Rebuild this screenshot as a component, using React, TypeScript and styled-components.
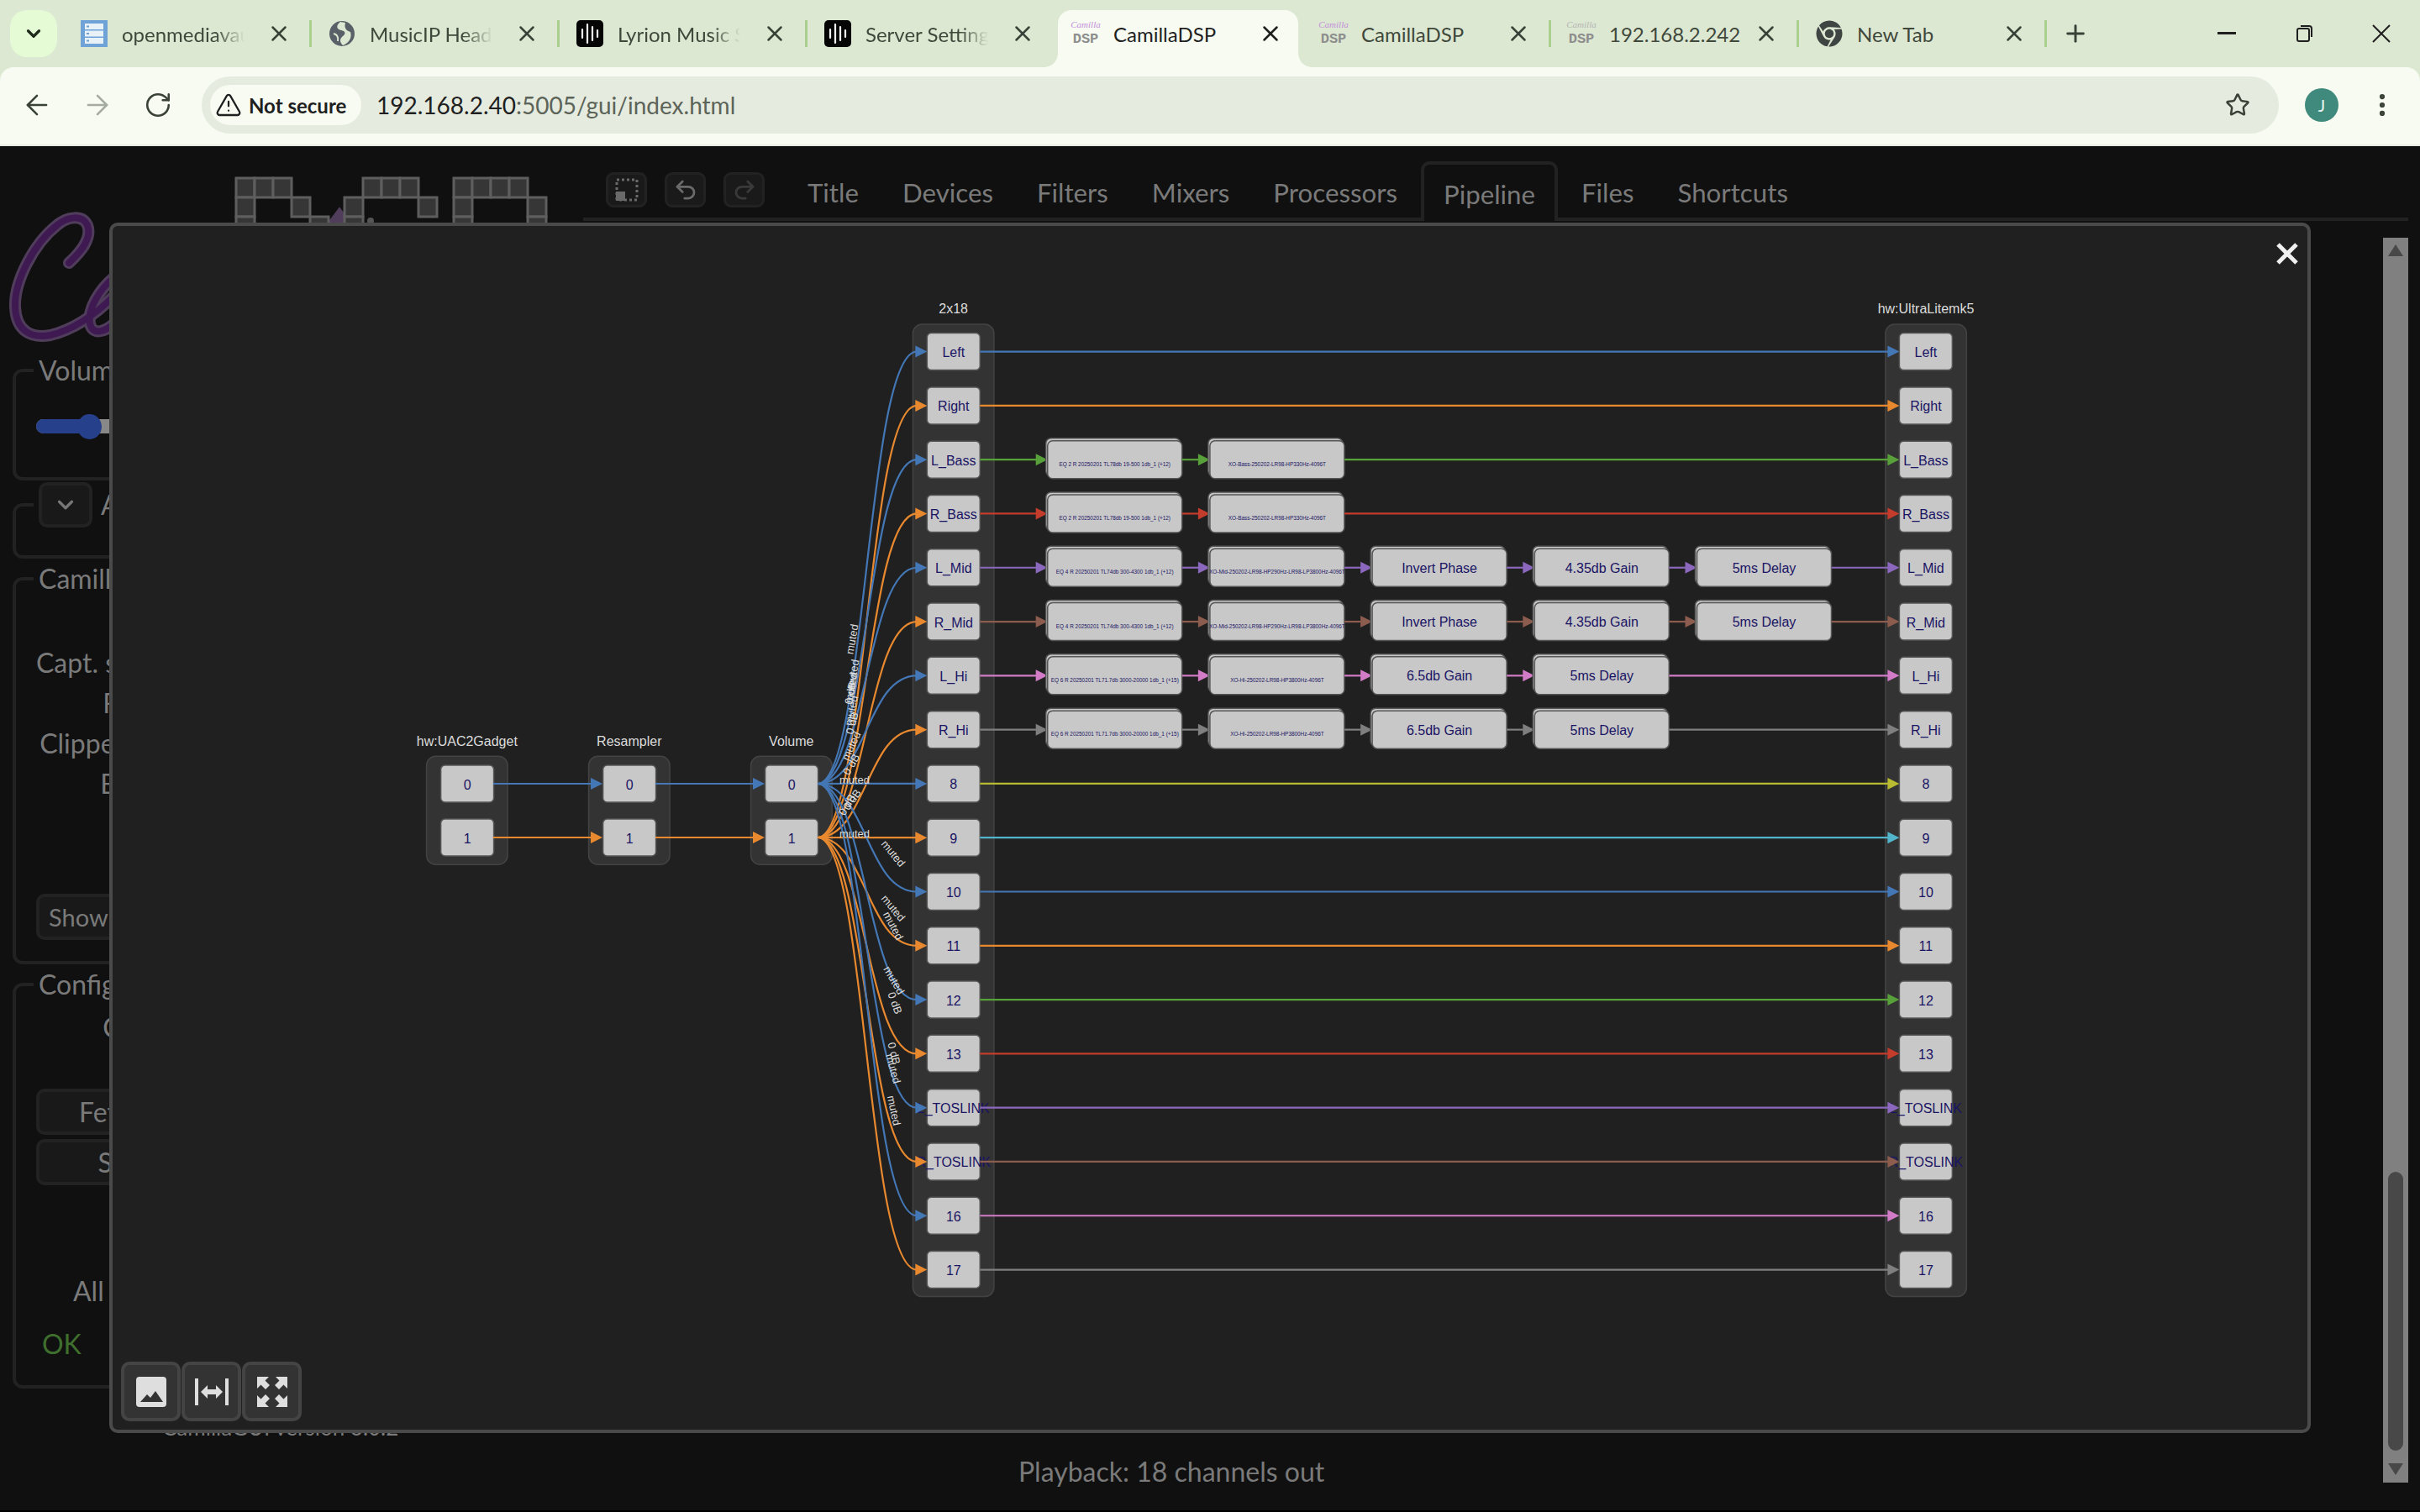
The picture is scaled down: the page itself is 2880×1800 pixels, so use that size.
import styled, { createGlobalStyle } from "styled-components";
import {
	ArrowLeft,
	ArrowRight,
	ChevronDown,
	EllipsisVertical,
	Plus,
	Redo2,
	RotateCw,
	Star,
	TriangleAlert,
	Undo2,
	X,
} from "lucide-react";
import { FaChrome } from "react-icons/fa";

const UI_FONT = `Lato, "Noto Sans", sans-serif`;
const GRAPH_FONT = `"Liberation Sans", Arial, sans-serif`;

const GlobalStyle = createGlobalStyle`
	html, body {
		margin: 0;
		padding: 0;
		background: #101010;
	}
	* {
		box-sizing: border-box;
	}
`;

const tabs = [
	{ icon: "omv", title: "openmediavault", fade: true },
	{ icon: "globe", title: "MusicIP Headless", fade: true },
	{ icon: "lyrion", title: "Lyrion Music Server", fade: true },
	{ icon: "lyrion", title: "Server Settings", fade: true },
	{ icon: "camilla", title: "CamillaDSP", active: true },
	{ icon: "camilla", title: "CamillaDSP" },
	{ icon: "camillaMuted", title: "192.168.2.242" },
	{ icon: "chrome", title: "New Tab" },
];

const navItems = ["Title", "Devices", "Filters", "Mixers", "Processors", "Pipeline", "Files", "Shortcuts"];

const lineColors = ["#4477b5", "#e8892f", "#57a03a", "#c43c2c", "#8b68bd", "#8c5d4f", "#d27cc7", "#7f7f7f", "#b8ba32", "#52b5cc"];

const outputs = ["Left", "Right", "L_Bass", "R_Bass", "L_Mid", "R_Mid", "L_Hi", "R_Hi", "8", "9", "10", "11", "12", "13", "L_TOSLINK", "R_TOSLINK", "16", "17"];

const EQ2 = "EQ 2 R 20250201 TL78db 19-500 1db_1 (+12)";
const EQ4 = "EQ 4 R 20250201 TL74db 300-4300 1db_1 (+12)";
const EQ6 = "EQ 6 R 20250201 TL71.7db 3000-20000 1db_1 (+15)";
const XOB = "XO-Bass-250202-LR98-HP330Hz-4096T";
const XOM = "XO-Mid-250202-LR98-HP290Hz-LR98-LP3800Hz-4096T";
const XOH = "XO-Hi-250202-LR98-HP3800Hz-4096T";

const filterRows: Record<number, string[]> = {
	2: [EQ2, XOB],
	3: [EQ2, XOB],
	4: [EQ4, XOM, "Invert Phase", "4.35db Gain", "5ms Delay"],
	5: [EQ4, XOM, "Invert Phase", "4.35db Gain", "5ms Delay"],
	6: [EQ6, XOH, "6.5db Gain", "5ms Delay"],
	7: [EQ6, XOH, "6.5db Gain", "5ms Delay"],
};

const fanLabels = [
	{ x: 1014, y: 761, a: -80, t: "muted" },
	{ x: 1015, y: 803, a: -80, t: "muted" },
	{ x: 1013, y: 819, a: -80, t: "muted" },
	{ x: 1012, y: 825, a: -80, t: "0 dB" },
	{ x: 1013, y: 846, a: -78, t: "muted" },
	{ x: 1014, y: 861, a: -75, t: "0 dB" },
	{ x: 1013, y: 888, a: -65, t: "muted" },
	{ x: 1013, y: 910, a: -60, t: "0 dB" },
	{ x: 1017, y: 928, a: 0, t: "muted" },
	{ x: 1014, y: 952, a: -55, t: "0 dB" },
	{ x: 1008, y: 958, a: -60, t: "0 dB" },
	{ x: 1017, y: 992, a: 0, t: "muted" },
	{ x: 1063, y: 1016, a: 50, t: "muted" },
	{ x: 1063, y: 1081, a: 50, t: "muted" },
	{ x: 1063, y: 1102, a: 62, t: "muted" },
	{ x: 1064, y: 1167, a: 60, t: "muted" },
	{ x: 1065, y: 1194, a: 70, t: "0 dB" },
	{ x: 1064, y: 1254, a: 75, t: "0 dB" },
	{ x: 1063, y: 1272, a: 75, t: "muted" },
	{ x: 1064, y: 1322, a: 78, t: "muted" },
];

const rowY = (i: number) => 418.6 + i * 64.29;

const Arrow = ({ tip, y, color }: { tip: number; y: number; color: string }) => (
	<polygon points={`${tip - 14},${y - 7} ${tip},${y} ${tip - 14},${y + 7}`} fill={color} />
);

const Edge = ({ from, tip, y, color }: { from: number; tip: number; y: number; color: string }) => (
	<>
		<EdgeLine d={`M${from} ${y} L${tip - 12} ${y}`} stroke={color} />
		<Arrow tip={tip} y={y} color={color} />
	</>
);

const ChannelNode = ({ x, y, label }: { x: number; y: number; label: string }) => (
	<>
		<NodeRect x={x} y={y - 22} width={63} height={44} rx={5} />
		<NodeText x={x + 31.5} y={y + 6.5}>
			{label}
		</NodeText>
	</>
);

const FilterNode = ({ x, y, label }: { x: number; y: number; label: string }) => {
	const small = label.length > 20;
	return (
		<>
			<NodeRect x={x - 2} y={y - 25.5} width={160} height={45} rx={6} />
			<NodeRect x={x} y={y - 22.5} width={160} height={45} rx={6} />
			<NodeText x={x + 80} y={small ? y + 7.6 : y + 6} $small={small}>
				{label}
			</NodeText>
		</>
	);
};

const PipelineGraph = () => (
	<GraphSvg viewBox="134 269 2612 1433">
		{[
			{ x: 507.6, label: "hw:UAC2Gadget" },
			{ x: 700.6, label: "Resampler" },
			{ x: 893.6, label: "Volume" },
		].map((g) => (
			<g key={g.label}>
				<GroupText x={g.x + 48.2} y={887.5}>
					{g.label}
				</GroupText>
				<GroupRect x={g.x} y={900.3} width={96.5} height={129} rx={11} />
				<ChannelNode x={g.x + 17} y={933} label="0" />
				<ChannelNode x={g.x + 17} y={997} label="1" />
			</g>
		))}

		<GroupText x={1134.6} y={373}>
			2x18
		</GroupText>
		<GroupRect x={1086.4} y={386} width={96.5} height={1157.6} rx={11} />
		<GroupText x={2292} y={373}>
			hw:UltraLitemk5
		</GroupText>
		<GroupRect x={2243.8} y={386} width={96.5} height={1157.6} rx={11} />

		{outputs.map((name, i) => (
			<g key={`out${i}`}>
				<ChannelNode x={1103.3} y={rowY(i)} label={name} />
				<ChannelNode x={2260.4} y={rowY(i)} label={name} />
			</g>
		))}

		{[0, 1].map((ch) => (
			<g key={`in${ch}`}>
				<Edge from={587} tip={717} y={933 + ch * 64} color={lineColors[ch]} />
				<Edge from={780} tip={910} y={933 + ch * 64} color={lineColors[ch]} />
			</g>
		))}

		{outputs.map((_, i) => {
			const y0 = i % 2 === 0 ? 933 : 997;
			const y1 = rowY(i);
			return (
				<EdgeLine key={`fan${i}`} d={`M973 ${y0} C1031 ${y0} 1031 ${y1} 1091 ${y1}`} stroke={lineColors[i % 2]} />
			);
		})}
		{outputs.map((_, i) => (
			<Arrow key={`fanArrow${i}`} tip={1103.3} y={rowY(i)} color={lineColors[i % 2]} />
		))}

		{fanLabels.map((l, i) => (
			<FanText key={`label${i}`} transform={`translate(${l.x} ${l.y}) rotate(${l.a})`}>
				{l.t}
			</FanText>
		))}

		{outputs.map((_, i) => {
			const boxes = filterRows[i] || [];
			const color = lineColors[i % 10];
			const y = rowY(i);
			const lastEnd = boxes.length ? 1246.7 + (boxes.length - 1) * 193.2 + 160 : 1166.3;
			return (
				<g key={`row${i}`}>
					{boxes.map((label, n) => {
						const x = 1246.7 + n * 193.2;
						return (
							<g key={`box${n}`}>
								<Edge from={n === 0 ? 1166.3 : x - 33.2} tip={x} y={y} color={color} />
								<FilterNode x={x} y={y} label={label} />
							</g>
						);
					})}
					<Edge from={lastEnd} tip={2260.4} y={y} color={color} />
				</g>
			);
		})}
	</GraphSvg>
);

const Favicon = ({ icon }: { icon: string }) => {
	if (icon === "omv") {
		return (
			<svg width="32" height="32" viewBox="0 0 32 32">
				<rect x="0" y="0" width="32" height="32" fill="#6fa3d8" />
				<rect x="5" y="4" width="22" height="7" fill="#e8f0f8" />
				<rect x="5" y="12.5" width="22" height="7" fill="#e8f0f8" />
				<rect x="5" y="21" width="22" height="7" fill="#e8f0f8" />
				<rect x="7" y="6.5" width="3" height="2" fill="#6fa3d8" />
				<rect x="7" y="15" width="3" height="2" fill="#6fa3d8" />
				<rect x="7" y="23.5" width="3" height="2" fill="#6fa3d8" />
			</svg>
		);
	}
	if (icon === "globe") {
		return (
			<svg width="32" height="32" viewBox="0 0 32 32">
				<circle cx="16" cy="16" r="15" fill="#596068" />
				<path d="M14 2 C8 7 10 11 15 12 C20 13 21 16 17 19 C13 22 13 26 17 30 C25 27 28 20 26 14 C22 13 18 10 20 3 Z" fill="#dde8d2" />
				<path d="M6 16 C10 17 12 20 11 25" stroke="#dde8d2" strokeWidth="2" fill="none" />
			</svg>
		);
	}
	if (icon === "lyrion") {
		return (
			<svg width="32" height="32" viewBox="0 0 32 32">
				<rect width="32" height="32" rx="5" fill="#050505" />
				<path d="M7 11V21M13 5V27M19 8V24M25 12V20" stroke="#f2f2f2" strokeWidth="2.2" strokeLinecap="round" />
			</svg>
		);
	}
	if (icon === "chrome") {
		return <FaChrome size={32} color="#3f4543" />;
	}
	return (
		<CamillaIcon>
			<CamillaScript $muted={icon === "camillaMuted"}>Camilla</CamillaScript>
			<CamillaMark>DSP</CamillaMark>
		</CamillaIcon>
	);
};

const CamillaLogo = () => (
	<LogoSvg viewBox="0 0 680 245">
		<g transform="translate(0 -174)">
			<LogoStroke d="M82 313 C96 300 110 284 104 268 C98 255 80 258 68 268 C40 290 17 335 18 365 C19 395 38 403 60 399 C85 393 110 378 136 352" />
			<LogoStroke d="M136 330 C118 345 104 368 107 385 C110 400 125 395 136 385" />
			<LogoStroke d="M398 266 L404 258 L410 266" />
			<LogoFill d="M82 313 C96 300 110 284 104 268 C98 255 80 258 68 268 C40 290 17 335 18 365 C19 395 38 403 60 399 C85 393 110 378 136 352" />
			<LogoFill d="M136 330 C118 345 104 368 107 385 C110 400 125 395 136 385" />
			{[
				[281, 212], [303, 212], [325, 212], [281, 235], [347, 235], [281, 258], [369, 258],
				[432, 212], [454, 212], [476, 212], [410, 235], [498, 235], [410, 258],
				[540, 212], [562, 212], [584, 212], [606, 212], [540, 235], [628, 235], [540, 258], [628, 258],
			].map(([x, y]) => (
				<PixelCell key={`${x}-${y}`} x={x} y={y} width={22} height={23} />
			))}
			<circle cx="441" cy="263" r="4" fill="#555" />
		</g>
	</LogoSvg>
);

const App = () => {
	return (
		<Screen>
			<GlobalStyle />
			<TabStrip>
				<TabSearch>
					<ChevronDown size={26} strokeWidth={3} color="#1f2a1c" />
				</TabSearch>
				{tabs.map((tab, idx) => (
					<Tab key={`tab${idx}`} $noSep={idx === 3 || idx === 4}>
						{tab.active && <TabShape />}
						<TabIcon>
							<Favicon icon={tab.icon} />
						</TabIcon>
						<TabTitle $fade={!!tab.fade} $active={!!tab.active}>
							{tab.title}
						</TabTitle>
						<TabClose>
							<X size={30} strokeWidth={2} color={tab.active ? "#1f1f1f" : "#3a4238"} />
						</TabClose>
					</Tab>
				))}
				<NewTab>
					<Plus size={32} strokeWidth={2.2} color="#3a4238" />
				</NewTab>
				<WindowControls>
					<WindowButton>
						<svg width="22" height="4" viewBox="0 0 22 4">
							<rect width="22" height="3" fill="#1f1f1f" />
						</svg>
					</WindowButton>
					<WindowButton>
						<svg width="24" height="24" viewBox="0 0 24 24" fill="none" stroke="#1f1f1f" strokeWidth="2">
							<rect x="4" y="6" width="14" height="15" rx="2" />
							<path d="M8 3H18C20 3 21 4 21 6V16" />
						</svg>
					</WindowButton>
					<WindowButton>
						<svg width="24" height="24" viewBox="0 0 24 24" stroke="#1f1f1f" strokeWidth="2">
							<path d="M2 2L22 22M22 2L2 22" />
						</svg>
					</WindowButton>
				</WindowControls>
			</TabStrip>

			<Toolbar>
				<ToolbarButton>
					<ArrowLeft size={38} strokeWidth={1.6} color="#3a4238" />
				</ToolbarButton>
				<ToolbarButton>
					<ArrowRight size={38} strokeWidth={1.6} color="#a5aba0" />
				</ToolbarButton>
				<ToolbarButton>
					<RotateCw size={34} strokeWidth={1.8} color="#3a4238" />
				</ToolbarButton>
				<Omnibox>
					<SecurityChip>
						<TriangleAlert size={32} strokeWidth={1.7} color="#1f1f1f" />
						Not secure
					</SecurityChip>
					<UrlText>
						<UrlHost>192.168.2.40</UrlHost>:5005/gui/index.html
					</UrlText>
					<OmniboxStar>
						<Star size={30} strokeWidth={2} color="#3a4238" />
					</OmniboxStar>
				</Omnibox>
				<ToolbarButton $margin="0 0 0 15px">
					<Avatar>J</Avatar>
				</ToolbarButton>
				<ToolbarButton>
					<EllipsisVertical size={34} strokeWidth={2.4} color="#3a4238" />
				</ToolbarButton>
			</Toolbar>

			<Page>
				<Sidebar>
					<CamillaLogo />
					<Panel $height={153}>
						<PanelLegend>Volume</PanelLegend>
						<SliderTrack>
							<SliderFill />
							<SliderThumb />
						</SliderTrack>
					</Panel>
					<Panel $height={91}>
						<PanelLegend>
							<ExpandRow>
								<ExpandButton>
									<ChevronDown size={30} strokeWidth={2.6} color="#777" />
								</ExpandButton>
								Advanced
							</ExpandRow>
						</PanelLegend>
					</Panel>
					<Panel $height={481}>
						<PanelLegend>CamillaDSP</PanelLegend>
						<StatusRows>
							<StatusLabel>Capt. samplerate</StatusLabel>
							<StatusLabel>Rate adjust</StatusLabel>
							<StatusLabel $shift={-4}>Clipped samples</StatusLabel>
							<StatusLabel>Buffer level</StatusLabel>
						</StatusRows>
						<ShowButton>Show more</ShowButton>
					</Panel>
					<Panel $height={503}>
						<PanelLegend>Config</PanelLegend>
						<ConfigRow>Config file</ConfigRow>
						<ActionButton $top={49}>Fetch from DSP</ActionButton>
						<ActionButton $top={5}>Send to DSP</ActionButton>
						<StatusNote>All changes applied</StatusNote>
						<StatusOk>OK</StatusOk>
					</Panel>
					<VersionText>CamillaGUI version 3.0.2</VersionText>
				</Sidebar>

				<Main>
					<Nav>
						<NavTool>
							<svg width="30" height="30" viewBox="0 0 30 30" fill="none">
								<rect x="3" y="3" width="24" height="24" stroke="#6a6a6a" strokeWidth="3" strokeDasharray="3 3" />
								<rect x="2" y="17" width="11" height="11" fill="#6a6a6a" />
							</svg>
						</NavTool>
						<NavTool>
							<Undo2 size={30} strokeWidth={2.2} color="#6a6a6a" />
						</NavTool>
						<NavTool>
							<Redo2 size={30} strokeWidth={2.2} color="#3a3a3a" />
						</NavTool>
						<NavTabs>
							{navItems.map((item) => (
								<NavTab key={item} $active={item === "Pipeline"}>
									{item}
								</NavTab>
							))}
						</NavTabs>
					</Nav>
					<MainBody>
						<Workspace>
							<PlaybackText>Playback: 18 channels out</PlaybackText>
						</Workspace>
						<Scrollbar>
							<ScrollUp />
							<ScrollThumb />
							<ScrollDown />
						</Scrollbar>
					</MainBody>
				</Main>

				<Modal>
					<PipelineGraph />
					<ModalClose>
						<svg width="26" height="26" viewBox="0 0 26 26" stroke="#f0f0f0" strokeWidth="5">
							<path d="M2 2L24 24M24 2L2 24" />
						</svg>
					</ModalClose>
					<ModalTools>
						<ModalTool>
							<svg width="36" height="36" viewBox="0 0 36 36">
								<rect width="36" height="36" rx="4" fill="#dedede" />
								<path d="M5 30L13 21L17 25L23 17L32 30Z" fill="#333" />
							</svg>
						</ModalTool>
						<ModalTool>
							<svg width="40" height="32" viewBox="0 0 40 32">
								<rect x="0" y="0" width="4" height="32" fill="#dedede" />
								<rect x="36" y="0" width="4" height="32" fill="#dedede" />
								<path d="M7 16L15 8V13H25V8L33 16L25 24V19H15V24Z" fill="#dedede" />
							</svg>
						</ModalTool>
						<ModalTool>
							<svg width="36" height="36" viewBox="0 0 36 36" fill="#dedede" stroke="none">
								{[0, 90, 180, 270].map((r) => (
									<g key={r} transform={`rotate(${r} 18 18)`}>
										<path d="M0 0H14L9.5 4.5L15 10L10 15L4.5 9.5L0 14Z" />
									</g>
								))}
							</svg>
						</ModalTool>
					</ModalTools>
				</Modal>
			</Page>
		</Screen>
	);
};

const Screen = styled.div`
	display: flex;
	flex-direction: column;
	position: relative;
	width: 2880px;
	height: 1800px;
	overflow: hidden;
	font-family: ${UI_FONT};
	background: #dde8d2;
`;

const TabStrip = styled.div`
	display: flex;
	align-items: flex-end;
	height: 80px;
	padding-left: 12px;
`;

const TabSearch = styled.div`
	display: flex;
	justify-content: center;
	align-items: center;
	align-self: flex-start;
	width: 56px;
	height: 56px;
	margin: 12px 8px 0 0;
	border-radius: 20px;
	background: #e5fbd6;
`;

const Tab = styled.div<{ $noSep: boolean }>`
	display: flex;
	align-items: center;
	position: relative;
	width: 295px;
	height: 68px;
	padding: 0 19px 12px 20px;

	&::after {
		content: "";
		display: ${(p) => (p.$noSep ? "none" : "block")};
		position: absolute;
		right: 0;
		top: 12px;
		width: 3px;
		height: 32px;
		background: #a9d08e;
	}
`;

const TabShape = styled.div`
	position: absolute;
	top: 0;
	bottom: 0;
	left: 3px;
	right: 6px;
	border-radius: 16px 16px 0 0;
	background: #f7fbf1;

	&::before,
	&::after {
		content: "";
		position: absolute;
		bottom: 0;
		width: 16px;
		height: 16px;
	}
	&::before {
		left: -16px;
		background: radial-gradient(circle at 0 0, transparent 15.5px, #f7fbf1 16px);
	}
	&::after {
		right: -16px;
		background: radial-gradient(circle at 100% 0, transparent 15.5px, #f7fbf1 16px);
	}
`;

const TabIcon = styled.div`
	display: flex;
	position: relative;
	flex-shrink: 0;
	width: 32px;
	height: 32px;
	margin-right: 17px;
`;

const TabTitle = styled.div<{ $fade: boolean; $active: boolean }>`
	position: relative;
	flex: 1;
	min-width: 0;
	margin-right: 8px;
	overflow: hidden;
	white-space: nowrap;
	font-size: 24px;
	color: ${(p) => (p.$active ? "#1f1f1f" : "#3f483b")};
	${(p) => p.$fade && "mask-image: linear-gradient(to right, #000 70%, transparent 92%);"}
`;

const TabClose = styled.div`
	display: flex;
	justify-content: center;
	position: relative;
	flex-shrink: 0;
	width: 40px;
`;

const NewTab = styled.div`
	display: flex;
	justify-content: center;
	align-items: center;
	align-self: flex-start;
	width: 40px;
	height: 56px;
	margin: 12px 0 0 14px;
`;

const WindowControls = styled.div`
	display: flex;
	align-self: flex-start;
	margin-left: auto;
`;

const WindowButton = styled.div`
	display: flex;
	justify-content: center;
	align-items: center;
	width: 92px;
	height: 80px;
`;

const CamillaIcon = styled.div`
	display: flex;
	flex-direction: column;
	align-items: center;
	width: 32px;
	height: 32px;
	line-height: 1;
`;

const CamillaScript = styled.span<{ $muted: boolean }>`
	font-family: "Liberation Serif", serif;
	font-style: italic;
	font-size: 11px;
	height: 14px;
	white-space: nowrap;
	color: ${(p) => (p.$muted ? "#b5b5b5" : "#c48fdc")};
`;

const CamillaMark = styled.span`
	font-family: "Liberation Mono", monospace;
	font-size: 17px;
	font-weight: 700;
	color: #8e8e8e;
`;

const Toolbar = styled.div`
	display: flex;
	align-items: center;
	flex-shrink: 0;
	height: 94px;
	padding: 0 9px 2px 8px;
	border-bottom: 2px solid #e6ecdf;
	border-radius: 16px 16px 0 0;
	background: #f7fbf1;
`;

const ToolbarButton = styled.div<{ $margin?: string }>`
	display: flex;
	justify-content: center;
	align-items: center;
	flex-shrink: 0;
	width: 72px;
	height: 68px;
	margin: ${(p) => p.$margin || 0};
`;

const Omnibox = styled.div`
	display: flex;
	align-items: center;
	flex: 1;
	height: 68px;
	margin-left: 16px;
	padding: 0 34px 0 10px;
	border-radius: 34px;
	background: #e5ebdf;
`;

const SecurityChip = styled.div`
	display: flex;
	align-items: center;
	gap: 8px;
	width: 180px;
	height: 48px;
	padding-left: 6px;
	border-radius: 24px;
	background: #f7fbf1;
	font-size: 24px;
	font-weight: 700;
	color: #1f1f1f;
	white-space: nowrap;
`;

const UrlText = styled.div`
	margin-left: 18px;
	font-size: 28px;
	color: #5c6358;
`;

const UrlHost = styled.span`
	color: #1f1f1f;
`;

const OmniboxStar = styled.div`
	display: flex;
	margin-left: auto;
`;

const Avatar = styled.div`
	display: flex;
	justify-content: center;
	align-items: center;
	width: 40px;
	height: 40px;
	border-radius: 50%;
	background: #3f8a7c;
	font-size: 20px;
	color: #e8f3f0;
`;

const Page = styled.div`
	display: flex;
	position: relative;
	flex: 1;
	min-height: 0;
	border-bottom: 2px solid #000;
	background: #101010;
	color: #7a7a7a;
	font-size: 32px;
`;

const Sidebar = styled.aside`
	display: flex;
	flex-direction: column;
	flex-shrink: 0;
	width: 694px;
	padding-left: 15px;
`;

const LogoSvg = styled.svg`
	display: block;
	flex-shrink: 0;
	width: 680px;
	height: 245px;
	margin-left: -15px;
`;

const LogoStroke = styled.path`
	fill: none;
	stroke: #503c5b;
	stroke-width: 14;
	stroke-linecap: round;
`;

const LogoFill = styled.path`
	fill: none;
	stroke: #3f1a52;
	stroke-width: 8;
	stroke-linecap: round;
`;

const PixelCell = styled.rect`
	fill: #363636;
	stroke: #5e5e5e;
	stroke-width: 3;
`;

const Panel = styled.fieldset<{ $height: number }>`
	flex-shrink: 0;
	width: 640px;
	height: ${(p) => p.$height}px;
	min-width: 0;
	margin: 0 0 2px;
	padding: 0;
	border: 4px solid #222;
	border-radius: 12px;
`;

const PanelLegend = styled.legend`
	margin-left: 21px;
	padding: 0 6px;
	line-height: 44px;
`;

const ExpandRow = styled.div`
	display: flex;
	align-items: center;
	gap: 10px;
`;

const ExpandButton = styled.div`
	display: flex;
	justify-content: center;
	align-items: center;
	width: 64px;
	height: 54px;
	border: 4px solid #222;
	border-radius: 10px;
	background: #191919;
`;

const SliderTrack = styled.div`
	position: relative;
	width: 500px;
	height: 17px;
	margin: 36px 0 0 24px;
	border-radius: 9px;
	background: #888;
`;

const SliderFill = styled.div`
	width: 60px;
	height: 100%;
	border-radius: 9px 0 0 9px;
	background: #27408b;
`;

const SliderThumb = styled.div`
	position: absolute;
	left: 49px;
	top: -6px;
	width: 29px;
	height: 30px;
	border-radius: 50%;
	background: #27408b;
`;

const StatusRows = styled.div`
	display: flex;
	flex-direction: column;
	margin-top: 54px;
`;

const StatusLabel = styled.div<{ $shift?: number }>`
	width: ${(p) => 260 + (p.$shift || 0)}px;
	line-height: 48px;
	text-align: right;
	white-space: nowrap;
`;

const ShowButton = styled.div`
	display: flex;
	align-items: center;
	width: 500px;
	height: 55px;
	margin: 107px 0 0 24px;
	padding-left: 11px;
	border: 4px solid #222;
	border-radius: 10px;
	background: #191919;
	font-size: 29px;
`;

const ConfigRow = styled.div`
	width: 246px;
	margin-top: 5px;
	line-height: 48px;
	text-align: right;
	white-space: nowrap;
`;

const ActionButton = styled.div<{ $top: number }>`
	display: flex;
	justify-content: center;
	align-items: center;
	width: 324px;
	height: 55px;
	margin: ${(p) => p.$top}px 0 0 24px;
	border: 4px solid #222;
	border-radius: 10px;
	background: #191919;
	font-size: 32px;
	white-space: nowrap;
`;

const StatusNote = styled.div`
	margin-top: 102px;
	padding-left: 68px;
	line-height: 48px;
	white-space: nowrap;
`;

const StatusOk = styled.div`
	margin-top: 15px;
	padding-left: 31px;
	line-height: 48px;
	color: #3f6f2d;
`;

const VersionText = styled.div`
	margin: 24px 0 0 178px;
	font-size: 26px;
	line-height: 40px;
	white-space: nowrap;
`;

const Main = styled.main`
	display: flex;
	flex-direction: column;
	flex: 1;
	min-width: 0;
	padding-right: 14px;
`;

const Nav = styled.nav`
	display: flex;
	align-items: flex-end;
	flex-shrink: 0;
	gap: 21px;
	height: 89px;
	padding-left: 27px;
	border-bottom: 4px solid #222;
`;

const NavTool = styled.div`
	display: flex;
	justify-content: center;
	align-items: center;
	width: 49px;
	height: 42px;
	margin-bottom: 12px;
	border: 3px solid #222;
	border-radius: 9px;
	background: #1a1a1a;
`;

const NavTabs = styled.div`
	display: flex;
	align-items: flex-end;
	margin-left: 4px;
	margin-bottom: -4px;
	font-size: 31.25px;
`;

const NavTab = styled.div<{ $active: boolean }>`
	display: flex;
	align-items: center;
	height: 71px;
	margin: ${(p) => (p.$active ? "0 2px" : "0")};
	padding: ${(p) => (p.$active ? "2px 23px 0" : "2px 26px 0")};
	border: 4px solid ${(p) => (p.$active ? "#222" : "transparent")};
	border-bottom: none;
	border-width: ${(p) => (p.$active ? "4px" : "0")};
	border-radius: 10px 10px 0 0;
	background: ${(p) => (p.$active ? "#101010" : "transparent")};
`;

const MainBody = styled.div`
	display: flex;
	flex: 1;
	min-height: 0;
`;

const Workspace = styled.div`
	display: flex;
	flex-direction: column;
	justify-content: flex-end;
	flex: 1;
	padding: 0 0 24px 518px;
`;

const PlaybackText = styled.div`
	line-height: 44px;
	white-space: nowrap;
`;

const Scrollbar = styled.div`
	display: flex;
	flex-direction: column;
	align-items: center;
	flex-shrink: 0;
	width: 30px;
	height: 1482px;
	margin-top: 20px;
	padding: 8px 0 9px;
	background: #808080;
`;

const ScrollUp = styled.div`
	width: 0;
	height: 0;
	border-left: 9px solid transparent;
	border-right: 9px solid transparent;
	border-bottom: 14px solid #484848;
`;

const ScrollThumb = styled.div`
	width: 18px;
	height: 332px;
	margin: auto 0 15px;
	border-radius: 9px;
	background: #484848;
`;

const ScrollDown = styled.div`
	width: 0;
	height: 0;
	border-left: 9px solid transparent;
	border-right: 9px solid transparent;
	border-top: 14px solid #484848;
`;

const Modal = styled.div`
	position: absolute;
	left: 130px;
	top: 91px;
	width: 2620px;
	height: 1441px;
	border: 4px solid #4a4a4a;
	border-radius: 10px;
	background: #202020;
`;

const GraphSvg = styled.svg`
	display: block;
	width: 100%;
	height: 100%;
`;

const GroupRect = styled.rect`
	fill: #333;
	stroke: #434343;
	stroke-width: 1.5;
`;

const NodeRect = styled.rect`
	fill: #c8c8c8;
	stroke: #555;
	stroke-width: 1.5;
`;

const NodeText = styled.text<{ $small?: boolean }>`
	font-family: ${GRAPH_FONT};
	font-size: ${(p) => (p.$small ? 6.4 : 16)}px;
	text-anchor: middle;
	fill: #1a1464;
`;

const GroupText = styled.text`
	font-family: ${GRAPH_FONT};
	font-size: 16px;
	text-anchor: middle;
	fill: #dcdcdc;
`;

const FanText = styled.text`
	font-family: ${GRAPH_FONT};
	font-size: 13px;
	text-anchor: middle;
	dominant-baseline: central;
	fill: #dcdcdc;
`;

const EdgeLine = styled.path`
	fill: none;
	stroke-width: 2.2;
`;

const ModalClose = styled.div`
	display: flex;
	position: absolute;
	right: 11px;
	top: 20px;
`;

const ModalTools = styled.div`
	display: flex;
	position: absolute;
	left: 10px;
	bottom: 10px;
	gap: 1px;
`;

const ModalTool = styled.div`
	display: flex;
	justify-content: center;
	align-items: center;
	width: 71px;
	height: 71px;
	border: 4px solid #444;
	border-radius: 10px;
	background: #333;
`;

export default App;
